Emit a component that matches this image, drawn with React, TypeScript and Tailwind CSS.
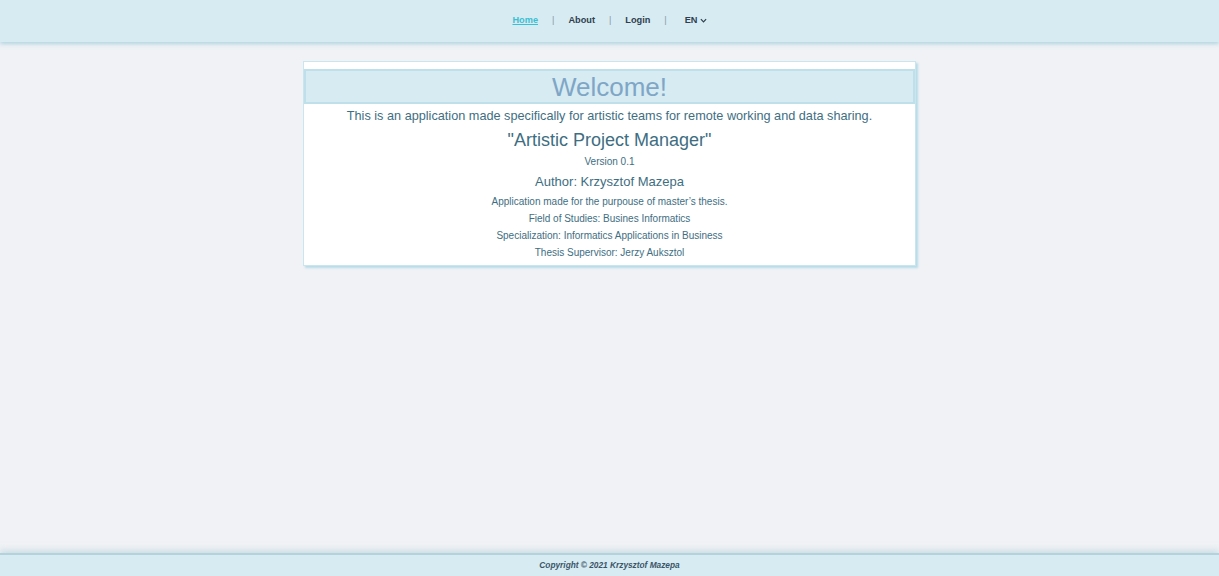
import * as React from "react";

const NavSep = () => <span className="text-[#8a9aa6] font-normal">|</span>;

export default function App() {
  return (
    <div
      className="min-h-screen flex flex-col bg-[#f0f2f5]"
      style={{ fontFamily: '"Liberation Sans", Arial, sans-serif' }}
    >
      <header className="h-[42px] shrink-0 bg-[#d7ebf2] shadow-[0_2px_4px_rgba(150,200,215,0.7)] flex items-center justify-center z-10">
        <nav className="flex items-center gap-[14px] text-[9.2px] font-bold text-[#2f3f4e]">
          <a className="text-[#3cbfd2] underline">Home</a>
          <NavSep />
          <a>About</a>
          <NavSep />
          <a>Login</a>
          <NavSep />
          <span className="flex items-center gap-[2px] ml-[4px]">
            EN
            <svg width="7" height="5" viewBox="0 0 8 5" fill="none">
              <path d="M1 1l3 3 3-3" stroke="#2f3f4e" strokeWidth="1.4" />
            </svg>
          </span>
        </nav>
      </header>

      <main className="flex-1 flex justify-center pt-[19px]">
        <div className="w-[613px] h-fit bg-white border border-[#c9e5ee] shadow-[2px_2px_2px_#b7dbe7] pt-[7px] pb-[3px] text-center text-[#3e6e82]">
          <div className="h-[35px] bg-[#d6ebf2] border-2 border-[#bfe0ea] flex items-center justify-center">
            <h1 className="text-[26px] text-[#7fa6c6] leading-none">Welcome!</h1>
          </div>
          <p className="text-[12.7px] mt-[4px] leading-[16px]">
            This is an application made specifically for artistic teams for remote working and data sharing.
          </p>
          <p className="text-[18px] mt-[5px] leading-[22px]">"Artistic Project Manager"</p>
          <p className="text-[10px] mt-[4px] leading-[14px]">Version 0.1</p>
          <p className="text-[13px] mt-[4px] leading-[18px]">Author: Krzysztof Mazepa</p>
          <p className="text-[10px] mt-[2px] leading-[17px]">Application made for the purpouse of master’s thesis.</p>
          <p className="text-[10px] leading-[17px]">Field of Studies: Busines Informatics</p>
          <p className="text-[10px] leading-[17px]">Specialization: Informatics Applications in Business</p>
          <p className="text-[10px] leading-[17.5px]">Thesis Supervisor: Jerzy Auksztol</p>
        </div>
      </main>

      <footer className="h-[23px] shrink-0 bg-[#d7ebf2] border-t-2 border-[#b3d2dc] shadow-[0_-3px_6px_rgba(180,210,220,0.6)] flex items-center justify-center">
        <span className="text-[8.3px] font-bold italic text-[#3b5568]">Copyright © 2021 Krzysztof Mazepa</span>
      </footer>
    </div>
  );
}
